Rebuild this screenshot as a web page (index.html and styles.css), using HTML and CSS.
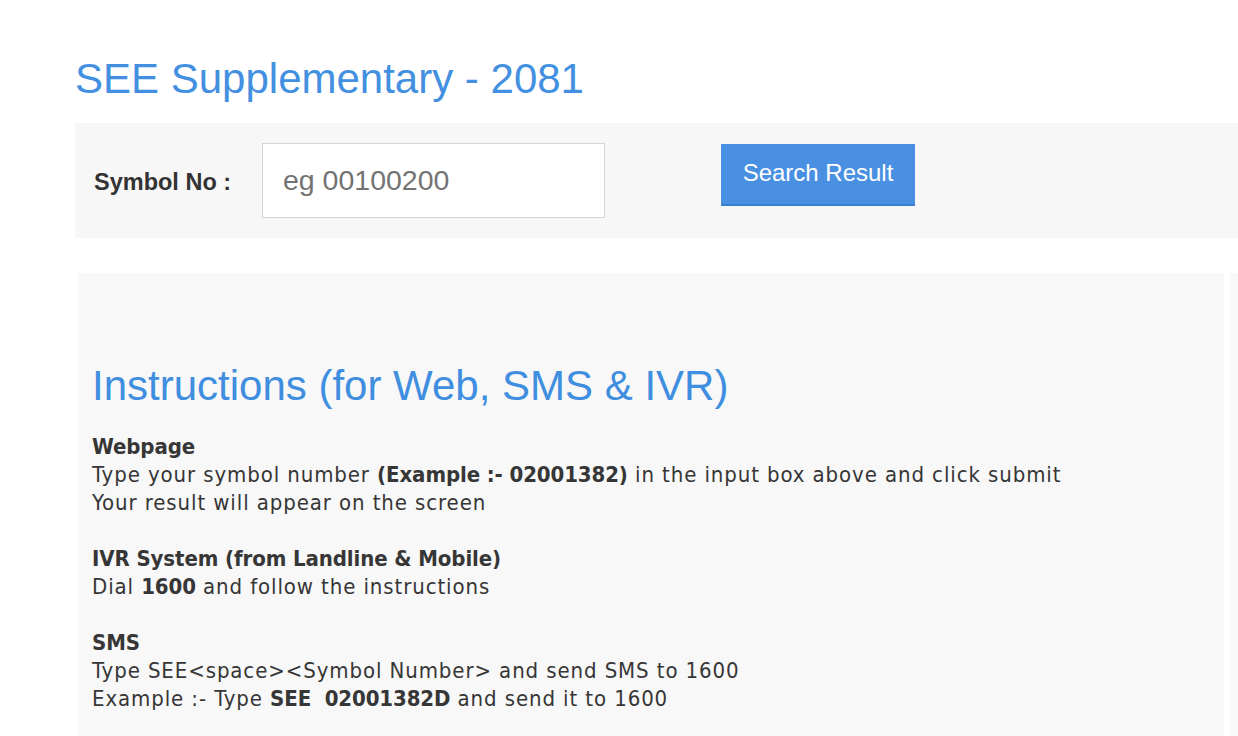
FILE: index.html
```html
<!DOCTYPE html>
<html>
<head>
<meta charset="utf-8">
<link rel="stylesheet" href="styles.css">
</head>
<body>
<div class="page">
  <h1 class="title">SEE Supplementary - 2081</h1>
  <form class="search-panel">
    <label class="search-label">Symbol No :</label>
    <input class="search-input" type="text" placeholder="eg 00100200">
    <button class="search-btn" type="button">Search Result</button>
  </form>
  <div class="content-row">
    <div class="info-panel">
      <h2 class="info-title">Instructions (for Web, SMS &amp; IVR)</h2>
      <p class="info-text">
        <b>Webpage</b><br>
        Type your symbol number <b>(Example :- 02001382)</b> in the input box above and click submit<br>
        Your result will appear on the screen<br><br>
        <b>IVR System (from Landline &amp; Mobile)</b><br>
        Dial <b>1600</b> and follow the instructions<br><br>
        <b>SMS</b><br>
        Type SEE&lt;space&gt;&lt;Symbol Number&gt; and send SMS to 1600<br>
        Example :- Type <b>SEE &nbsp;02001382D</b> and send it to 1600
      </p>
    </div>
    <div class="side-panel"></div>
  </div>
</div>
</body>
</html>
```
FILE: styles.css
```css
html, body {
  margin: 0;
  padding: 0;
  background: #ffffff;
  overflow: hidden;
}
.page {
  padding-left: 75px;
  padding-top: 52px;
  font-family: "Liberation Sans", Arial, sans-serif;
}
.title {
  margin: 0;
  font-weight: normal;
  font-size: 42px;
  line-height: 54px;
  color: #4390e1;
}
.search-panel {
  margin: 17px 0 0 0;
  height: 115px;
  background: #f7f7f7;
  display: flex;
  align-items: flex-start;
  padding-left: 19px;
  box-sizing: border-box;
}
.search-label {
  font-weight: bold;
  font-size: 23.5px;
  line-height: 28px;
  color: #333;
  margin-top: 45px;
  width: 168px;
}
.search-input {
  margin-top: 20px;
  width: 343px;
  height: 75px;
  box-sizing: border-box;
  border: 1px solid #d4d4d4;
  background: #fff;
  padding: 0 20px;
  font-family: "Liberation Sans", Arial, sans-serif;
  font-size: 28.5px;
  color: #555;
  outline: none;
}
.search-input::placeholder {
  color: #737373;
}
.search-btn {
  margin-top: 21px;
  margin-left: 116px;
  width: 194px;
  height: 62px;
  border: none;
  border-bottom: 2px solid #3a7fcf;
  background: #4a90e2;
  color: #fff;
  font-family: "Liberation Sans", Arial, sans-serif;
  font-size: 24px;
  padding: 0 0 2px 0;
}
.content-row {
  display: flex;
  margin-top: 35px;
  margin-left: 3px;
  gap: 6px;
}
.info-panel {
  width: 1146px;
  flex: none;
  background: #f8f8f8;
  padding: 88px 14px 40px 14px;
  box-sizing: border-box;
  min-height: 480px;
}
.side-panel {
  flex: 1;
  background: #f8f8f8;
}
.info-title {
  margin: 0;
  font-weight: normal;
  font-size: 42px;
  line-height: 50px;
  color: #3f8ee0;
}
.info-text {
  margin: 22px 0 0 0;
  font-family: "DejaVu Sans Condensed", "DejaVu Sans", sans-serif;
  font-size: 22px;
  letter-spacing: 0.9px;
  line-height: 28px;
  color: #363636;
}
.info-text b {
  font-weight: bold;
  letter-spacing: -0.1px;
}
```
